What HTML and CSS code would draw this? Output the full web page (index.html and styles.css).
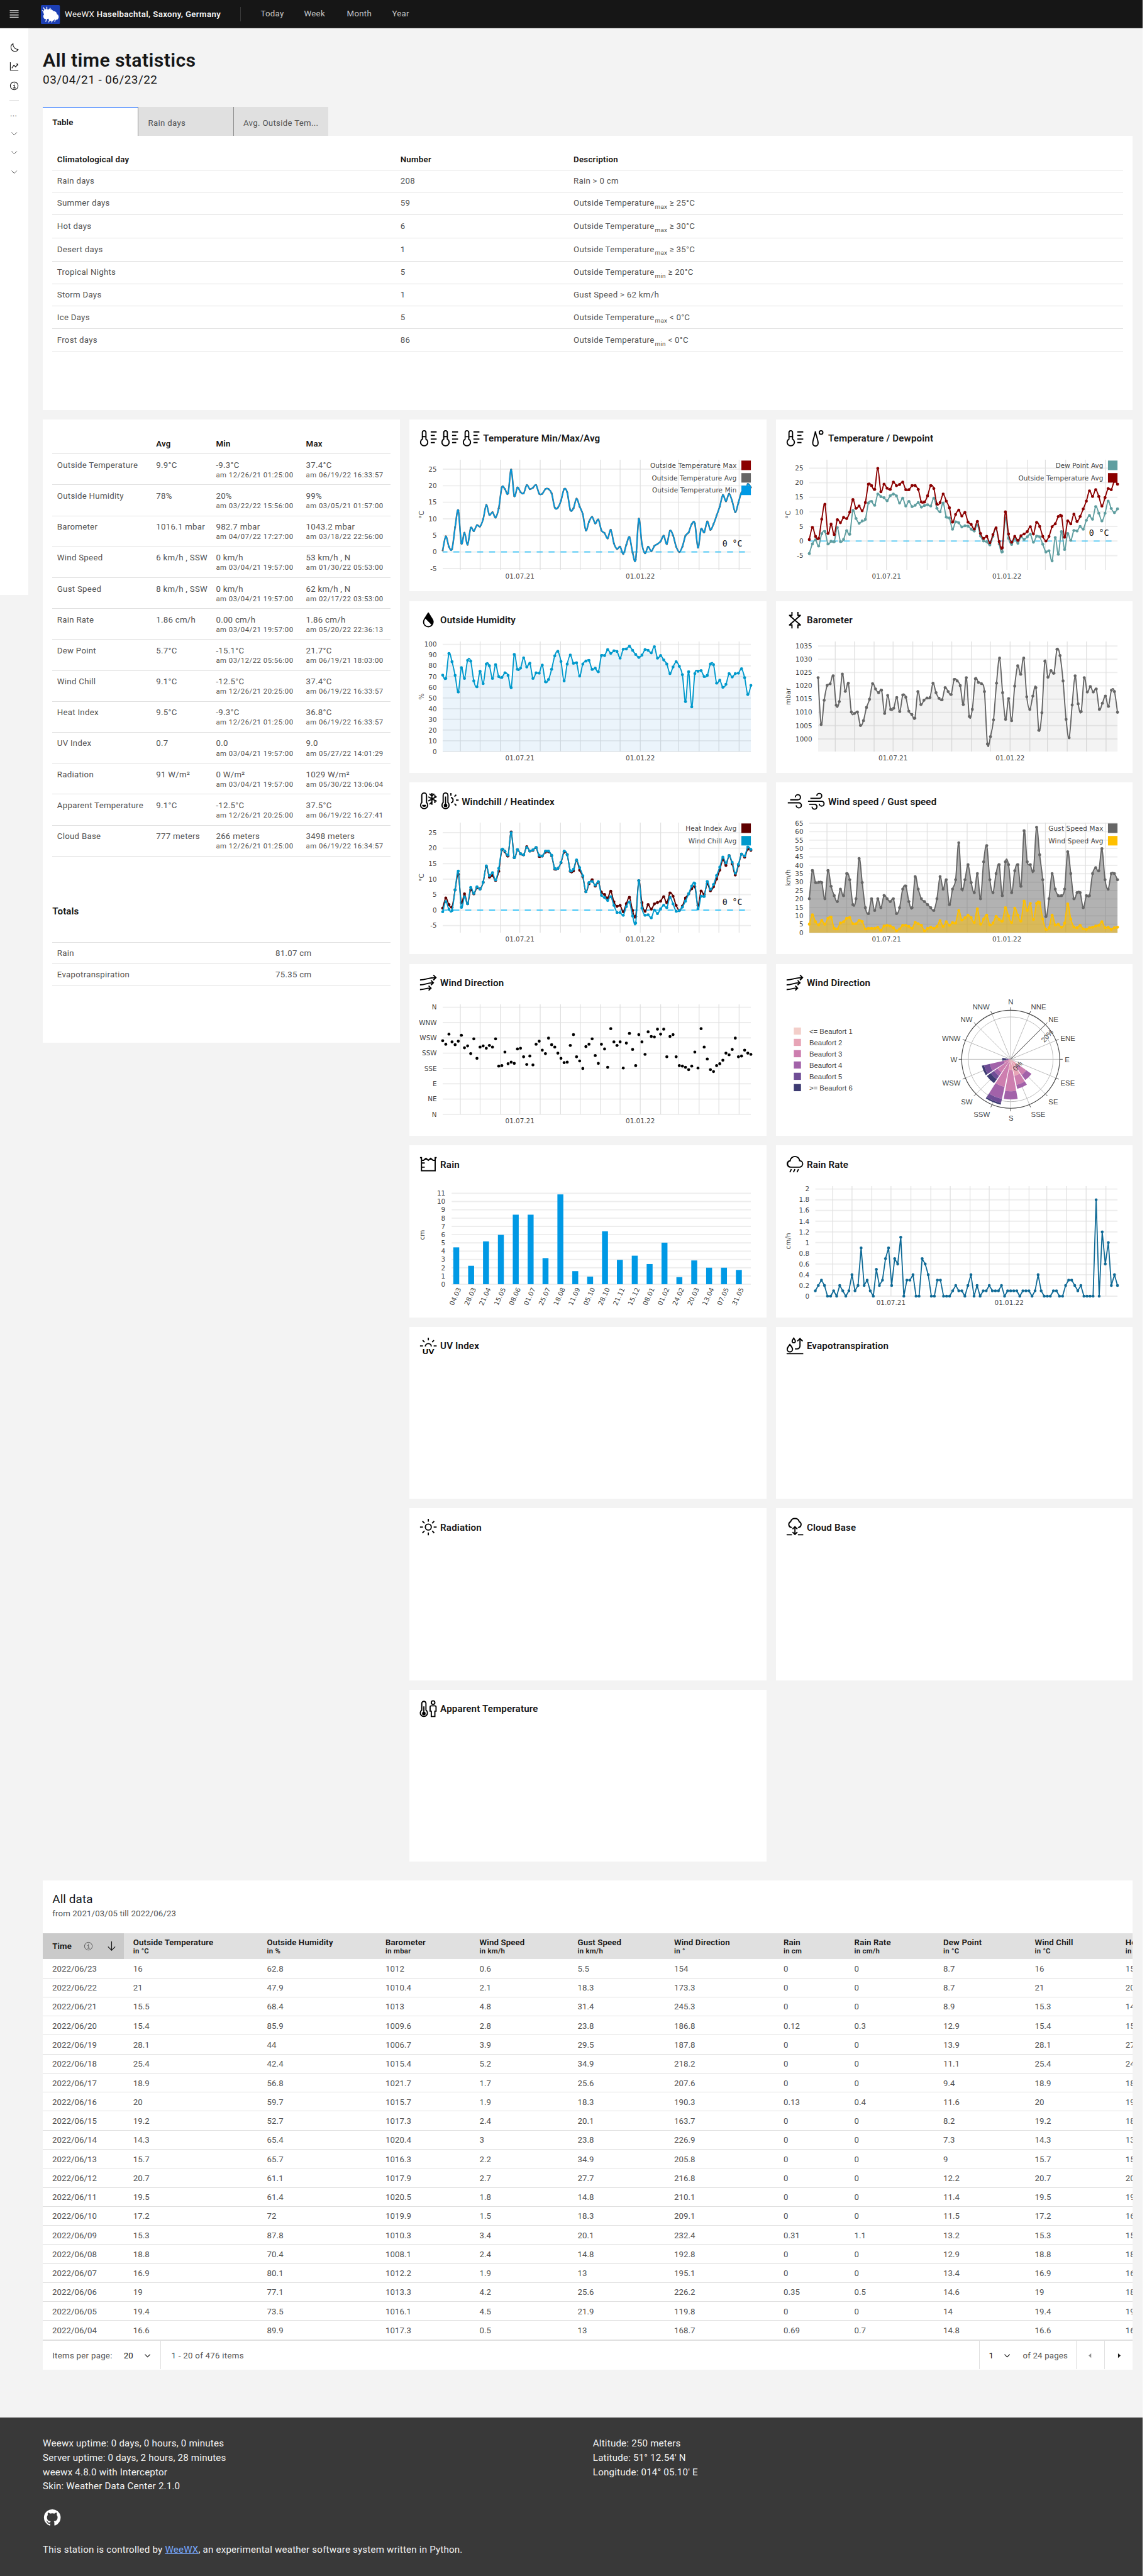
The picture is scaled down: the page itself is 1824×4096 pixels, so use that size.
FILE: index.html
```html
<!DOCTYPE html>
<html lang="en">
<head>
<meta charset="utf-8">
<title>All time statistics</title>
<link rel="stylesheet" href="styles.css">
</head>
<body>
<svg class="defs" aria-hidden="true">
  <symbol id="thermo" viewBox="0 0 32 32"><path d="M6 17V6a3 3 0 0 1 6 0v11a6.1 6.1 0 1 1-6 0zM6 13h6M20 5h10M20 11h7M20 17h10M20 23h7"/></symbol>
  <symbol id="dew" viewBox="0 0 32 32"><path d="M14.5 4C13.500 12 10 18 10 23.800a4.500 5 0 0 0 9 0C19 18 15.500 12 14.500 4z"/><circle cx="24" cy="6" r="3"/></symbol>
  <symbol id="humidity" viewBox="0 0 32 32"><path class="fill" d="M23.476 13.993 16.847 3.437a1.040 1.040 0 0 0-1.694 0L8.494 14.044A9.986 9.986 0 0 0 7 19a9 9 0 0 0 18 0 10.063 10.063 0 0 0-1.524-5.007ZM16 26a7.009 7.009 0 0 1-7-7 7.978 7.978 0 0 1 1.218-3.944l.935-1.490 10.070 10.070A6.977 6.977 0 0 1 16 26Z"/></symbol>
  <symbol id="pressure" viewBox="0 0 32 32"><path d="M11 2v6H6M21 2v6h5M11 30v-6H6M21 30v-6h5M6.700 8l18.600 16M25.300 8 6.700 24"/></symbol>
  <symbol id="chill" viewBox="0 0 32 32"><path d="M5 18V6a4 4 0 0 1 8 0v12a6 6 0 1 1-8 0zM22 2v20M18 3.500 22 7l4-3.500M18 21l4-4M16 8.500l14 7.500M16 15.500l14-7.500M27 5v4.800M27 19v-4.500"/><path class="fill" d="M5.500 22h7a3.500 3.500 0 0 1-7 0z"/></symbol>
  <symbol id="heat" viewBox="0 0 32 32"><path d="M5 18V6a4 4 0 0 1 8 0v12a6 6 0 1 1-8 0zM9 8v14M18 2v4.500M27 5l-3 3M26.500 14H31M27 23l-3-3M18 9.500a4.600 4.600 0 0 1 0 9"/><circle class="fill" cx="9" cy="23" r="3"/></symbol>
  <symbol id="wind" viewBox="0 0 32 32"><path d="M8 13.500h13a4.300 4.300 0 1 0-4.300-4.300M4 18.500h18.500a4.300 4.300 0 1 1-4.300 4.300"/></symbol>
  <symbol id="gust" viewBox="0 0 32 32"><path d="M6 11h15a4.100 4.100 0 1 0-4.100-4.100M2 16h23a4 4 0 1 1-4 4M4 21h9a4.100 4.100 0 1 1-4.100 4.100"/></symbol>
  <symbol id="direction" viewBox="0 0 32 32"><path d="M2 10.800c11 0 13-4 26-4M24.500 2.500l4.300 4.300-4.300 4.300M2 19c10 0 11-3.500 22-3.500M20.500 11.500l4 4-4 4M2 27c8 0 9-2.500 18-2.500M16.500 20.500l4 4-4 4"/></symbol>
  <symbol id="gauge" viewBox="0 0 32 32"><path d="M2 5h2.500v22h23V5H30M4.500 9.500H8L12 6l4 3.500L20 6l4 3.500h3M4.500 14H10M4.500 21H10"/></symbol>
  <symbol id="rain" viewBox="0 0 32 32"><path class="fill" d="M23.500 22H8.500A6.500 6.500 0 0 1 7.200 9.140a9 9 0 0 1 17.600 0A6.500 6.500 0 0 1 23.500 22ZM16 4a7 7 0 0 0-6.940 6.140L9 11h-.14a4.500 4.500 0 0 0 .36 9H23.500a4.500 4.500 0 0 0 .36-9H23l-.1-.82A7 7 0 0 0 16 4Z"/><path d="M10 24.500l-2.500 5M16 24.500l-2.500 5M22 24.500l-2.500 5"/></symbol>
  <symbol id="evapo" viewBox="0 0 32 32"><path d="M2 29h28M7.500 13.500C5 17 3 19 3 21.500a4.500 4.500 0 0 0 9 0C12 19 10 17 7.500 13.500zM14 3c-1.500 2.300-2.700 3.500-2.700 5a2.700 2.700 0 0 0 5.400 0C16.700 6.500 15.500 5.300 14 3zM16 21h3.500a5 5 0 0 0 5-5V3.500M20 8l4.500-4.500L29 8"/></symbol>
  <symbol id="sun" viewBox="0 0 32 32"><path d="M16 2v5M16 25v5M2 16h5M25 16h5M6.100 6.100l3.500 3.500M22.400 22.400l3.500 3.500M6.100 25.900l3.500-3.500M22.400 9.600l3.500-3.500"/><circle cx="16" cy="16" r="5"/></symbol>
  <symbol id="base" viewBox="0 0 32 32"><path d="M2 29h9M21 29h9M16 16v12M12 19.500l4-4 4 4M12 24.500l4 4 4-4M11 16.500H9.500a5 5 0 0 1-.7-9.500 7.400 7 0 0 1 14.400 0 5 5 0 0 1-.7 9.500H21"/></symbol>
  <symbol id="apparent" viewBox="0 0 32 32"><path d="M5 18V7a3.500 3.500 0 0 1 7 0v11a6 6 0 1 1-7 0zM8.500 12v12"/><circle class="fill" cx="8.500" cy="24" r="3"/><circle cx="24" cy="5.500" r="3"/><path d="M21 11h6a2 2 0 0 1 2 2v7h-2v9h-6v-9h-2v-7a2 2 0 0 1 2-2z"/></symbol>
  <symbol id="chevron" viewBox="0 0 16 16"><path d="M3 5.500l5 5 5-5"/></symbol>
  <symbol id="info" viewBox="0 0 16 16"><circle cx="8" cy="8" r="6.500"/><path d="M6.500 7H8.300v4.500M6 11.500h4.500M8 4v1.500"/></symbol>
</svg>

<header class="topbar">
  <svg class="menu" viewBox="0 0 16 14"><path d="M0 1h16M0 5h16M0 9h16M0 13h16"/></svg>
  <svg class="logo" viewBox="0 0 32 32"><rect width="32" height="32" rx="2" fill="#1c3fb4"/><g fill="#fff"><circle cx="9" cy="12" r="5"/><circle cx="9" cy="19" r="5"/><circle cx="15" cy="14" r="7"/><circle cx="21" cy="16" r="6"/><circle cx="25" cy="20" r="5"/><circle cx="18" cy="21" r="6"/></g><path stroke="#fff" stroke-width="1.500" fill="none" d="M4 4l4 6M10 3v6M16 5l-3 5M2 9l5 3M10 23l-2 5M15 24l-2 5M20 24l-2 5M25 23l-2 5"/></svg>
  <span class="brand">WeeWX <b>Haselbachtal, Saxony, Germany</b></span>
  <nav><a>Today</a><a>Week</a><a>Month</a><a>Year</a></nav>
</header>

<div class="shell">
  <aside class="rail">
    <svg viewBox="0 0 16 16"><path d="M6 1.500A7 7 0 0 0 9 14.500a6 6 0 0 0 5.500-3.200A9 9 0 0 1 6 1.500z"/></svg>
    <svg viewBox="0 0 16 16"><path d="M1.500 1v13.500H15M4 11l3.500-5 3 3L14 4M11 4h3v3"/></svg>
    <svg><use href="#info"/></svg>
    <hr>
    <span class="dots">...</span>
    <svg class="small"><use href="#chevron"/></svg>
    <svg class="small"><use href="#chevron"/></svg>
    <svg class="small"><use href="#chevron"/></svg>
  </aside>

  <main>
    <h1>All time statistics</h1>
    <p class="range">03/04/21 - 06/23/22</p>
    <div class="tabs"><span class="tab active">Table</span><span class="tab">Rain days</span><span class="tab">Avg. Outside Tem...</span></div>
    <section class="panel" id="days"></section>

    <div class="board">
      <section class="stats">
        <div id="stats"></div>
        <h3>Totals</h3>
        <div class="totals"><div><span>Rain</span><span>81.07 cm</span></div><div><span>Evapotranspiration</span><span>75.35 cm</span></div></div>
      </section>
      <div class="cards" id="cards"></div>
    </div>

    <section class="data">
      <h2>All data</h2>
      <p>from 2021/03/05 till 2022/06/23</p>
      <div class="scroller" id="data"></div>
      <footer class="pager">
        <span class="cell items">Items per page: <b>20</b><svg><use href="#chevron"/></svg></span>
        <span class="cell count">1 - 20 of 476 items</span>
        <span class="cell page"><b>1</b><svg><use href="#chevron"/></svg>of 24 pages</span>
        <span class="cell step"><svg viewBox="0 0 16 16"><path class="off" d="M10 3.500v9L5 8z"/></svg></span>
        <span class="cell step"><svg viewBox="0 0 16 16"><path class="on" d="M6 3.500v9L11 8z"/></svg></span>
      </footer>
    </section>
  </main>
</div>

<footer class="site">
  <div class="cols">
    <div>Weewx uptime: 0 days, 0 hours, 0 minutes<br>Server uptime: 0 days, 2 hours, 28 minutes<br>weewx 4.8.0 with Interceptor<br>Skin: Weather Data Center 2.1.0</div>
    <div>Altitude: 250 meters<br>Latitude: 51° 12.54' N<br>Longitude: 014° 05.10' E</div>
  </div>
  <svg class="github" viewBox="0 0 32 32"><path d="M16 2a14 14 0 0 0-4.430 27.280c.7.130 1-.3 1-.67v-2.380c-3.890.840-4.710-1.880-4.710-1.880A3.710 3.710 0 0 0 6.240 22.300c-1.270-.86.100-.85.100-.85A2.940 2.940 0 0 1 8.480 22.900a3 3 0 0 0 4.080 1.160 2.930 2.930 0 0 1 .88-1.870c-3.100-.36-6.370-1.560-6.370-6.920a5.400 5.400 0 0 1 1.440-3.760 5 5 0 0 1 .14-3.700s1.170-.38 3.850 1.430a13.300 13.300 0 0 1 7 0c2.670-1.810 3.840-1.430 3.840-1.430a5 5 0 0 1 .14 3.700 5.400 5.400 0 0 1 1.440 3.760c0 5.380-3.270 6.560-6.390 6.910a3.330 3.330 0 0 1 .95 2.590v3.840c0 .46.250.81 1 .67A14 14 0 0 0 16 2Z"/></svg>
  <p>This station is controlled by <a>WeeWX</a>, an experimental weather software system written in Python.</p>
</footer>
<script src="app.js"></script>
</body>
</html>
```
FILE: styles.css
```css
* { box-sizing: border-box; margin: 0; padding: 0; }
html { background: #fff; overflow: hidden; }
body {
  zoom: 0.94614;
  width: 1920px;
  font: 14px/18px Roboto, "Liberation Sans", sans-serif;
  letter-spacing: .3px;
  color: #161616;
  background: #f3f3f3;
}
.defs { display: block; width: 0; height: 0; position: absolute; }
svg { fill: none; stroke: currentColor; }
svg .fill { fill: currentColor; stroke: none; }
svg text { stroke: none; }

/* top bar */
.topbar { height: 48px; display: flex; align-items: center; background: #161616; border-bottom: 1px solid #393939; color: #f4f4f4; padding-left: 16px; }
.menu { width: 16px; height: 13px; stroke-width: 1.3; color: #f4f4f4; }
.logo { width: 32px; height: 32px; margin: 1px 8px 0 37px; stroke: none; }
.brand { width: 295px; letter-spacing: .3px; white-space: nowrap; }
.brand b { font-weight: 600; letter-spacing: .41px; }
nav { display: flex; gap: 36px; color: #c6c6c6; border-left: 1px solid #393939; height: 24px; line-height: 24px; padding-left: 33px; }
nav a:nth-child(1) { width: 37px; } nav a:nth-child(2) { width: 36px; } nav a:nth-child(3) { width: 40px; }

.shell { display: flex; align-items: flex-start; }
.rail { width: 48px; height: 952px; background: #fff; display: flex; flex-direction: column; align-items: center; padding-top: 24px; }
.rail svg { width: 16px; height: 16px; margin-bottom: 16px; stroke-width: 1.2; }
.rail hr { width: 16px; border: 0; border-top: 1px solid #dcdcdc; margin: 0 0 16px; }
.rail .dots { width: 14px; height: 16px; line-height: 16px; margin: -2px 0 18px 17px; color: #525252; align-self: flex-start; }
.rail .small { width: 14px; color: #525252; }

main { width: 1872px; padding: 33px 16px 0 24px; }
h1 { font-size: 32px; line-height: 40px; font-weight: 600; letter-spacing: .38px; }
.range { font-size: 20px; line-height: 28px; letter-spacing: .5px; margin-bottom: 31px; }
.tabs { display: flex; height: 48px; }
.tab { width: 160px; padding: 18px 15px 0 16px; background: #e0e0e0; color: #525252; border-left: 1px solid #8d8d8d; white-space: nowrap; letter-spacing: .33px; }
.tab.active { background: #fff; color: #161616; font-weight: 600; border-left: 0; border-top: 2px solid #0f62fe; padding-top: 16px; letter-spacing: .2px; }

/* climatological days */
.panel { background: #fff; height: 461px; padding: 22.500px 16px 0; }
.panel div { display: grid; grid-template-columns: 577px 291px 1fr; align-items: center; padding-left: 8px; border-bottom: 1px solid #e0e0e0; height: 36.600px; color: #525252; }
.panel div.head { font-weight: 600; color: #161616; height: 36px; }
.panel div.tall { height: 38.720px; padding-bottom: 1px; }
.panel sub { font-size: 10.500px; line-height: 0; vertical-align: -5px; margin-left: 1px; }

.board { display: grid; grid-template-columns: 600px 1216px; gap: 16px; margin-top: 16px; align-items: start; }
.stats { background: #fff; height: 1047px; padding: 25px 16px 0; }
.srow { display: grid; grid-template-columns: 166.400px 100.600px 151.300px 1fr; height: 52px; padding: 9px 0 0 8px; border-bottom: 1px solid #e0e0e0; color: #525252; white-space: nowrap; }
.srow.head { font-weight: 600; color: #161616; height: 33.500px; padding-top: 7px; }
.srow small { display: block; font-size: 12px; line-height: 16px; letter-spacing: .53px; }
h3 { font-size: 16px; line-height: 24px; font-weight: 600; margin: 81px 0 39px; letter-spacing: .1px; }
.totals { border-top: 1px solid #e0e0e0; color: #525252; }
.totals div { display: grid; grid-template-columns: 367px 1fr; align-items: center; height: 36px; padding-left: 8px; border-bottom: 1px solid #e0e0e0; }

.cards { display: grid; grid-template-columns: 600px 600px; gap: 16px; }
.card { background: #fff; height: 289px; }
.card h4 { display: flex; align-items: center; gap: 4px; height: 48px; padding: 16px 0 0 16px; font-size: 16px; font-weight: 600; letter-spacing: .17px; }
.card h4 span { padding-top: 1.500px; }
.card h4 svg { width: 32px; height: 32px; stroke-width: 2; color: #000; }
.uvtext { font: 600 12px Roboto, sans-serif; fill: #000; letter-spacing: 0; }
.chart { display: block; width: 600px; height: 241px; font: 11px "DejaVu Sans", sans-serif; letter-spacing: 0; }
.chart text { fill: #444; }
.chart .zero { font: 14px "DejaVu Sans Mono", monospace; fill: #161616; }
.chart.rose { font: 12px "Liberation Sans", sans-serif; }

/* data table */
.data { background: #fff; height: 822px; margin-top: 32px; }
.data h2 { font-size: 20px; line-height: 26px; font-weight: 400; padding: 18.500px 0 0 16px; letter-spacing: .1px; }
.data > p { padding-left: 16px; height: 43.500px; color: #525252; letter-spacing: .14px; line-height: 22px; }
.scroller { overflow: hidden; }
.drow { display: grid; grid-template-columns: 136px 225px 199.200px 158px 164.800px 162.200px 183.900px 119.100px 149.500px 153.700px 152.500px 28.100px; height: 32px; align-items: center; border-bottom: 1px solid #e0e0e0; color: #525252; letter-spacing: .06px; }
.drow > span { padding-left: 15.800px; padding-top: 1px; white-space: nowrap; overflow: hidden; }
.drow.head { height: 44px; background: #e0e0e0; color: #161616; font-weight: 600; line-height: 16px; letter-spacing: .16px; }
.drow.head small { display: block; font-size: 12px; line-height: 13px; letter-spacing: .3px; }
.drow.head .sorted { background: #cacaca; height: 44px; padding: 0 10px 0 16px; display: flex; align-items: center; }
.sorted svg { width: 16px; height: 16px; stroke-width: 1; color: #525252; margin-left: 20px; }
.sorted svg + svg { width: 20px; height: 20px; margin-left: auto; color: #161616; stroke-width: 1.300; }
.pager { display: flex; height: 49px; color: #525252; border-top: 1px solid #e0e0e0; letter-spacing: .3px; }
.pager .cell { display: flex; align-items: center; border-left: 1px solid #e0e0e0; padding-top: 2px; }
.pager .items { width: 198px; padding-left: 16px; border-left: 0; }
.pager b { font-weight: 400; color: #161616; }
.pager .items b { margin-left: 19px; width: 33px; }
.pager svg { width: 14px; height: 14px; stroke-width: 1.300; color: #161616; }
.pager .count { flex: 1; padding-left: 17px; }
.pager .page { width: 162px; padding-left: 15px; letter-spacing: .2px; }
.pager .page b { width: 24px; }
.pager .page svg { margin-right: 19px; }
.pager .step { width: 48px; justify-content: center; }
.on { fill: #161616; stroke: none; } .off { fill: #8d8d8d; stroke: none; }

.site { margin-top: 80px; height: 266px; background: #393939; color: #f4f4f4; font-size: 16px; line-height: 24px; letter-spacing: .2px; padding: 32px 0 0 72px; width: 1920px; }
.cols { display: grid; grid-template-columns: 924.500px 1fr; height: 120px; }
.github { display: block; width: 32px; height: 32px; fill: #fff; stroke: none; margin-bottom: 26.500px; }
.site a { color: #78a9ff; text-decoration: underline; }
```
FILE: app.js
```js
const $ = id => document.getElementById(id);

/* ---------- tables ---------- */
const T = 'Outside Temperature';
const days = [['Rain days', 208, 'Rain &gt; 0 cm'], ['Summer days', 59, T + '<sub>max</sub> ≥ 25°C'], ['Hot days', 6, T + '<sub>max</sub> ≥ 30°C'], ['Desert days', 1, T + '<sub>max</sub> ≥ 35°C'], ['Tropical Nights', 5, T + '<sub>min</sub> ≥ 20°C'], ['Storm Days', 1, 'Gust Speed &gt; 62 km/h'], ['Ice Days', 5, T + '<sub>max</sub> &lt; 0°C'], ['Frost days', 86, T + '<sub>min</sub> &lt; 0°C']];
$('days').innerHTML = '<div class="head"><span>Climatological day</span><span>Number</span><span>Description</span></div>' +
  days.map(d => `<div class="${d[2].includes('sub') ? 'tall' : ''}">${d.map(c => `<span>${c}</span>`).join('')}</div>`).join('');

const stats = `Outside Temperature|9.9°C|-9.3°C|12/26/21 01:25:00|37.4°C|06/19/22 16:33:57
Outside Humidity|78%|20%|03/22/22 15:56:00|99%|03/05/21 01:57:00
Barometer|1016.1 mbar|982.7 mbar|04/07/22 17:27:00|1043.2 mbar|03/18/22 22:56:00
Wind Speed|6 km/h , SSW|0 km/h|03/04/21 19:57:00|53 km/h , N|01/30/22 05:53:00
Gust Speed|8 km/h , SSW|0 km/h|03/04/21 19:57:00|62 km/h , N|02/17/22 03:53:00
Rain Rate|1.86 cm/h|0.00 cm/h|03/04/21 19:57:00|1.86 cm/h|05/20/22 22:36:13
Dew Point|5.7°C|-15.1°C|03/12/22 05:56:00|21.7°C|06/19/21 18:03:00
Wind Chill|9.1°C|-12.5°C|12/26/21 20:25:00|37.4°C|06/19/22 16:33:57
Heat Index|9.5°C|-9.3°C|12/26/21 01:25:00|36.8°C|06/19/22 16:33:57
UV Index|0.7|0.0|03/04/21 19:57:00|9.0|05/27/22 14:01:29
Radiation|91 W/m²|0 W/m²|03/04/21 19:57:00|1029 W/m²|05/30/22 13:06:04
Apparent Temperature|9.1°C|-12.5°C|12/26/21 20:25:00|37.5°C|06/19/22 16:27:41
Cloud Base|777 meters|266 meters|12/26/21 01:25:00|3498 meters|06/19/22 16:34:57`.split('\n').map(r => r.split('|'));
$('stats').innerHTML = '<div class="srow head"><span></span><span>Avg</span><span>Min</span><span>Max</span></div>' +
  stats.map(r => `<div class="srow"><span>${r[0]}</span><span>${r[1]}</span><span>${r[2]}<small>am ${r[3]}</small></span><span>${r[4]}<small>am ${r[5]}</small></span></div>`).join('');

const heads = [['Outside Temperature', 'in °C'], ['Outside Humidity', 'in %'], ['Barometer', 'in mbar'], ['Wind Speed', 'in km/h'], ['Gust Speed', 'in km/h'], ['Wind Direction', 'in °'], ['Rain', 'in cm'], ['Rain Rate', 'in cm/h'], ['Dew Point', 'in °C'], ['Wind Chill', 'in °C'], ['Heat Index', 'in °C']];
const rows = `23 16 62.8 1012 0.6 5.5 154 0 0 8.7 16 15.4
22 21 47.9 1010.4 2.1 18.3 173.3 0 0 8.7 21 20.1
21 15.5 68.4 1013 4.8 31.4 245.3 0 0 8.9 15.3 14.9
20 15.4 85.9 1009.6 2.8 23.8 186.8 0.12 0.3 12.9 15.4 15.3
19 28.1 44 1006.7 3.9 29.5 187.8 0 0 13.9 28.1 27.6
18 25.4 42.4 1015.4 5.2 34.9 218.2 0 0 11.1 25.4 24.6
17 18.9 56.8 1021.7 1.7 25.6 207.6 0 0 9.4 18.9 18.1
16 20 59.7 1015.7 1.9 18.3 190.3 0.13 0.4 11.6 20 19.4
15 19.2 52.7 1017.3 2.4 20.1 163.7 0 0 8.2 19.2 18.3
14 14.3 65.4 1020.4 3 23.8 226.9 0 0 7.3 14.3 13.5
13 15.7 65.7 1016.3 2.2 34.9 205.8 0 0 9 15.7 15.1
12 20.7 61.1 1017.9 2.7 27.7 216.8 0 0 12.2 20.7 20.2
11 19.5 61.4 1020.5 1.8 14.8 210.1 0 0 11.4 19.5 19.1
10 17.2 72 1019.9 1.5 18.3 209.1 0 0 11.5 17.2 16.8
09 15.3 87.8 1010.3 3.4 20.1 232.4 0.31 1.1 13.2 15.3 15.3
08 18.8 70.4 1008.1 2.4 14.8 192.8 0 0 12.9 18.8 18.5
07 16.9 80.1 1012.2 1.9 13 195.1 0 0 13.4 16.9 16.8
06 19 77.1 1013.3 4.2 25.6 226.2 0.35 0.5 14.6 19 18.9
05 19.4 73.5 1016.1 4.5 21.9 119.8 0 0 14 19.4 19.2
04 16.6 89.9 1017.3 0.5 13 168.7 0.69 0.7 14.8 16.6 16.7`.split('\n').map(r => r.split(' '));
$('data').innerHTML = '<div class="drow head"><span class="sorted">Time<svg><use href="#info"/></svg><svg viewBox="0 0 20 20"><path d="M10 2v15M4 11l6 6 6-6"/></svg></span>' +
  heads.map(h => `<span>${h[0]}<small>${h[1]}</small></span>`).join('') + '</div>' +
  rows.map(r => `<div class="drow"><span>2022/06/${r[0]}</span>${r.slice(1).map(c => `<span>${c}</span>`).join('')}</div>`).join('');

/* ---------- series ---------- */
const n = s => s.trim().split(/\s+/).map(Number);
const temp = n('.5 4.7 1.6 .9 7.5 12.6 2.6 5.8 2.2 7.3 6.3 8.1 7.7 9.9 14.2 11.2 12 10.4 13.2 19.5 19 17.7 24.9 16.9 19.5 18.1 17.7 20.2 19 19.4 20.2 17.6 17.6 19 19 17.7 13.4 13.4 15.5 19 18 12.7 13.2 16.1 13.7 11.4 6.5 9.1 10.6 8.6 9.8 6.5 5.7 4.1 6.7 2.6 .9 1.6 -.6 2.2 4.5 -.2 -2.3 10 2.4 -.4 1.6 .2 1.8 2.4 3.2 4.9 2.4 6.4 5 1.6 0 1.6 4.9 5.9 8.4 8.6 1.3 6.9 5.9 9.2 6.7 8.4 11 13.7 17.2 15.3 17.6 15.3 12 14.9 18 17.6 20.5 19.5');
const dew = n('603 561 543 570 516 506 561 549 551 489 550 541 503 518 414 449 470 460 453 381 374 391 342 353 358 371 349 342 350 381 360 394 374 397 391 379 399 392 389 394 360 404 420 381 443 447 496 464 468 486 481 483 496 504 478 526 548 551 565 527 492 561 595 447 536 563 537 558 530 541 530 518 553 527 530 562 596 591 635 533 606 507 585 515 545 502 504 484 496 457 436 452 397 426 460 426 373 405 423 407').map(v => (548 - v) / 12.8);
const hum = n('1136 1150 1041 1077 1137 1210 1103 1150 1071 1074 1161 1187 1119 1173 1087 1095 1150 1090 1142 1146 1126 1137 1191 1045 1110 1105 1060 1100 1084 1150 1126 1127 1092 1165 1155 1110 1051 1031 1076 1161 1087 1048 1084 1082 1140 1087 1074 1071 1111 1105 1121 1050 1050 1024 1040 1029 1032 1061 1022 1021 1009 1027 1045 1058 1048 1024 1027 1038 1011 1061 1050 1069 1087 1129 1100 1077 1097 1134 1252 1121 1275 1129 1119 1116 1142 1137 1087 1090 1171 1158 1189 1176 1129 1144 1129 1127 1108 1147 1221 1181').map(v => (1471 - v) / 4.7);
const baro = n('1147 1353 1246 1181 1174 1139 1268 1252 1131 1207 1171 1298 1304 1298 1357 1336 1278 1242 1173 1197 1213 1202 1304 1225 1286 1281 1234 1296 1223 1233 1294 1309 1325 1208 1265 1246 1236 1234 1171 1213 1238 1244 1191 1208 1221 1155 1161 1182 1265 1147 1317 1286 1152 1168 1173 1208 1438 1406 1332 1171 1061 1213 1330 1239 1336 1184 1095 1132 1061 1231 1286 1228 1191 1378 1301 1074 1145 1116 1127 1022 1050 1161 1330 1411 1267 1139 1262 1296 1147 1210 1186 1210 1197 1286 1259 1228 1273 1202 1208 1299').map(v => 1000 + (1416 - v) / 11.657);
const heat = n('574 531 559 569 496 430 551 513 555 496 513 487 492 464 397 442 435 456 417 326 334 352 250 359 326 343 347 313 331 328 317 354 352 336 334 351 408 405 381 336 346 417 415 371 412 440 504 470 453 480 464 506 516 531 502 547 566 562 589 555 528 584 609 457 551 587 559 578 556 550 544 525 551 509 523 562 584 565 531 513 491 483 562 501 516 470 500 483 450 412 367 392 351 386 433 392 344 357 323 328').map(v => (582 - v) / 13.16);
const chill = n('589 546 579 584 496 416 570 526 555 486 511 483 493 464 394 435 423 454 405 324 331 348 253 359 325 342 347 316 331 326 316 349 352 331 331 349 405 405 379 331 347 415 408 369 402 436 504 465 460 476 461 519 529 541 525 562 592 592 604 567 548 607 637 457 574 604 602 615 582 597 577 561 572 528 556 587 584 569 544 513 480 469 577 523 524 460 494 473 435 400 357 382 351 379 425 387 344 352 314 324').map(v => (582 - v) / 13.16);
const gust = n('534 414 465 464 465 534 414 481 521 546 493 521 427 453 559 534 363 465 572 597 534 584 534 572 520 534 546 534 597 572 493 480 546 572 440 493 534 546 559 572 584 534 440 493 453 559 493 453 296 493 453 389 465 508 427 534 377 308 453 508 427 389 521 377 389 508 415 389 481 245 377 389 415 230 347 453 610 534 427 493 521 521 493 334 427 534 508 508 572 521 521 427 402 415 321 453 493 427 427 453').map(v => (678 - v) / 7.154);
const wind = n('642 602 632 645 626 642 617 612 660 662 637 632 617 614 640 640 626 631 662 660 660 660 655 668 650 647 650 657 670 662 647 647 652 660 634 640 647 670 660 655 660 652 627 652 632 647 635 637 584 624 615 604 614 635 577 642 620 604 645 637 609 622 629 572 607 635 574 604 629 544 584 554 622 554 551 620 664 657 604 645 642 655 637 556 620 654 657 647 662 664 657 655 650 647 632 657 655 664 657 655').map(v => (678 - v) / 7.154);
const dirs = n('1136 1151 1108 1141 1153 1138 1113 1166 1158 1191 1128 1211 1163 1158 1168 1156 1163 1128 1244 1242 1184 1234 1227 1232 1171 1168 1204 1237 1201 1239 1151 1138 1176 1191 1125 1153 1163 1189 1211 1229 1227 1156 1110 1204 1222 1254 1161 1151 1128 1199 1232 1151 1171 1249 1085 1141 1156 1141 1252 1146 1105 1173 1242 1110 1141 1194 1098 1118 1120 1087 1108 1087 1204 1118 1110 1204 1242 1244 1249 1259 1244 1184 1252 1085 1163 1214 1259 1267 1242 1234 1219 1189 1196 1173 1125 1204 1201 1176 1189 1194').map(v => (1449 - v) / 65);
const rate = n('.1 .2 .3 .2 0 0 .1 0 .2 .1 0 .1 .4 .1 .2 .9 .2 .3 .1 0 .5 .2 .3 .7 .9 .2 .7 .6 1.1 0 .3 .3 .4 0 0 .7 .6 .4 0 0 .3 .3 0 0 0 .1 .2 .1 .1 0 .2 .4 0 .2 0 .1 .1 .2 .1 .1 .1 .2 0 .1 .1 .1 .1 0 .1 .1 .1 0 .1 .4 .1 0 0 0 .1 .1 0 0 .2 .3 .3 .2 .1 .2 0 0 0 0 1.8 0 1.2 .6 1 .2 .4 .2');

/* ---------- time charts ---------- */
const months = [.0573, .1214, .187, .2504, .3164, .3824, .4466, .5122, .5756, .6412, .7073, .766, .8321, .8962, .9618];
const f = v => v.toFixed(1);

function curve(p, smooth) {
  let d = `M${f(p[0][0])} ${f(p[0][1])}`;
  for (let i = 0; i < p.length - 1; i++) {
    const a = p[i - 1] || p[i], b = p[i], c = p[i + 1], e = p[i + 2] || c;
    d += smooth
      ? `C${f(b[0] + (c[0] - a[0]) / 6)} ${f(b[1] + (c[1] - a[1]) / 6)} ${f(c[0] - (e[0] - b[0]) / 6)} ${f(c[1] - (e[1] - b[1]) / 6)} ${f(c[0])} ${f(c[1])}`
      : `L${f(c[0])} ${f(c[1])}`;
  }
  return d;
}

/* y0: position of value zero, u: pixels per unit */
function chart(o) {
  const left = o.left || 56, right = 574, Y = v => o.y0 - v * o.u;
  let s = '';
  for (const [v, label] of o.ticks)
    s += `<path d="M${left} ${f(Y(v))}H${right}" stroke="#ededed" stroke-width="2"/><text x="${left - 10}" y="${f(Y(v) + 4)}" text-anchor="end">${label}</text>`;
  for (const m of months) s += `<path d="M${f(left + m * (right - left))} 68V253" stroke="#e0e0e0" stroke-width="1.300"/>`;
  for (const [m, t] of [[.2504, '01.07.21'], [.6412, '01.01.22']])
    s += `<text x="${f(left + m * (right - left))}" y="268" text-anchor="middle">${t}</text>`;
  if (o.zero) s += `<path d="M${left} ${f(Y(0))}H${right}" stroke="#35c3f7" stroke-width="1.800" stroke-dasharray="10 10" stroke-dashoffset="2"/>`;
  for (const r of o.series) {
    const p = r.data.map((v, i) => [left + i * (right - left) / (r.data.length - 1), Y(v)]);
    const d = curve(p, !o.straight);
    if (r.area) s += `<path d="${d}V253H${left}Z" fill="${r.area}" stroke="none"/>`;
    if (!r.dotsOnly) s += `<path d="${d}" stroke="${r.color}" stroke-width="${r.w || 2}" stroke-linejoin="round"/>`;
    if (r.r) s += `<g fill="${r.color}" stroke="none">${p.map(q => `<circle cx="${f(q[0])}" cy="${f(q[1])}" r="${r.r}"/>`).join('')}</g>`;
  }
  (o.legend || []).forEach(([t, c, w], i) => {
    s += `<rect x="558" y="${69.500 + 21 * i}" width="16" height="16" fill="${c}" stroke="none"/><text x="${550 - w}" y="${81.500 + 21 * i}" textLength="${w}">${t}</text>`;
  });
  if (o.zero) s += `<text class="zero" x="526" y="${f(Y(0) - 9)}">0 °C</text>`;
  if (o.unit) s += `<text transform="translate(24.500 160.500) rotate(-90)" text-anchor="middle">${o.unit}</text>`;
  return `<svg class="chart" viewBox="0 48 600 241">${s}</svg>`;
}
const range = (a, b, st) => { const r = []; for (let v = a; v <= b + 1e-9; v += st) r.push([v, +v.toFixed(1)]); return r; };

function rainBars() {
  const v = [4.46, 2.23, 5.18, 5.97, 8.41, 8.41, 3.16, 10.86, 1.58, .93, 6.4, 2.95, 3.45, 2.44, 5.03, .86, 2.88, 2, 2, 1.73];
  const l = '04.03 28.03 21.04 15.05 08.06 01.07 25.07 18.08 11.09 05.10 28.10 21.11 15.12 08.01 01.02 24.02 20.03 13.04 07.05 31.05'.split(' ');
  let s = '';
  for (let i = 0; i < 12; i++) s += `<path d="M71 ${f(233 - i * 13.9)}H574" stroke="#ededed" stroke-width="2"/><text x="60.500" y="${f(237 - i * 13.9)}" text-anchor="end">${i}</text>`;
  v.forEach((h, i) => {
    const x = 78.8 + 25 * i;
    s += `<rect x="${f(x - 5)}" y="${f(233 - h * 13.9)}" width="10" height="${f(h * 13.9)}" fill="#0099e5" stroke="none"/><text transform="translate(${f(x + 8.500)} 241) rotate(-65)" text-anchor="end">${l[i]}</text>`;
  });
  return `<svg class="chart" viewBox="0 48 600 241">${s}<text transform="translate(25.500 150) rotate(-90)" text-anchor="middle">cm</text></svg>`;
}

function rose() {
  const cx = 394.5, cy = 160.4, R = 82.4;
  const col = ['#f3cec9', '#e7a4b6', '#cd7eaf', '#a262a9', '#6f4d96', '#3d3b72'];
  const pt = (r, a) => `${f(cx + r * Math.sin(a * Math.PI / 180))} ${f(cy - r * Math.cos(a * Math.PI / 180))}`;
  let s = '';
  for (let i = 0; i < 16; i++) s += `<path d="M${cx} ${cy}L${pt(R, i * 22.5)}" stroke="#b8b8b8"/><path d="M${pt(R, i * 22.5)}L${pt(R + 5, i * 22.5)}" stroke="#444"/>`;
  s += `<circle cx="${cx}" cy="${cy}" r="71.200" stroke="#b8b8b8"/>`;
  /* [bearing, [Beaufort class, outer radius]...] */
  const petals = [[270, [2, 4], [4, 7], [5, 14.2]], [247.5, [2, 12], [3, 36], [4, 46], [5, 49.7]], [225, [1, 5], [2, 27], [3, 34], [4, 41], [5, 49]], [202.5, [1, 6], [2, 47.4], [3, 68], [4, 75.5], [5, 78]], [180, [0, 3], [1, 17.8], [2, 53.8], [3, 67.6]], [157.5, [0, 4], [1, 28.5], [2, 44], [3, 50.7]], [135, [1, 15], [2, 32], [3, 42.6]]];
  for (const [a, ...seg] of petals) {
    let r0 = 0;
    for (const [c, r] of seg) {
      s += `<path d="M${pt(r0, a - 10)}L${pt(r, a - 10)}A${r} ${r} 0 0 1 ${pt(r, a + 10)}L${pt(r0, a + 10)}A${r0} ${r0} 0 0 0 ${pt(r0, a - 10)}Z" fill="${col[c]}" stroke="none"/>`;
      r0 = r;
    }
  }
  s += `<circle cx="${cx}" cy="${cy}" r="${R}" stroke="#444" stroke-width="1.200"/><path d="M${cx} ${cy}L${pt(R, 45)}" stroke="#444"/>`;
  const names = [['N', 394.5, 64, 'middle'], ['NNE', 428.7, 71.8, 'start'], ['NE', 458, 93.6, 'start'], ['ENE', 478.3, 125.2, 'start'], ['E', 485.5, 160.8, 'start'], ['ESE', 478.3, 200, 'start'], ['SE', 458, 232, 'start'], ['SSE', 428.7, 253, 'start'], ['S', 395, 259, 'middle'], ['SSW', 359.5, 253, 'end'], ['SW', 330.2, 232, 'end'], ['WSW', 310.3, 200, 'end'], ['W', 304.6, 160.8, 'end'], ['WNW', 310.3, 125.2, 'end'], ['NW', 330.2, 93.6, 'end'], ['NNW', 359.1, 71.8, 'end']];
  for (const [t, x, y, a] of names) s += `<text x="${x}" y="${y + 4.3}" text-anchor="${a}">${t}</text>`;
  s += `<text transform="translate(459 124) rotate(-48)" text-anchor="middle">20%</text><text transform="translate(409 174.500) rotate(-48)" text-anchor="middle">0%</text>`;
  ['&lt;= Beaufort 1', 'Beaufort 2', 'Beaufort 3', 'Beaufort 4', 'Beaufort 5', '&gt;= Beaufort 6'].forEach((t, i) => {
    s += `<rect x="30" y="${107 + 19 * i}" width="12" height="12" fill="${col[i]}" stroke="none"/><text x="56" y="${118 + 19 * i}">${t}</text>`;
  });
  return `<svg class="chart rose" viewBox="0 48 600 241">${s}</svg>`;
}

/* ---------- cards ---------- */
const uvIcon = '<svg viewBox="0 0 32 32"><path d="M16 2v4.500M6.500 6.500 9.500 9.500M25.500 6.500l-3 3M2 16h5M25 16h5M11 17a5 5 0 0 1 10 0"/><text class="uvtext" x="6" y="30" textLength="20" lengthAdjust="spacingAndGlyphs">UV</text></svg>';
const icon = i => i === 'uv' ? uvIcon : `<svg><use href="#${i}"/></svg>`;
const cards = [
  ['thermo thermo thermo', 'Temperature Min/Max/Avg', chart({ y0: 223.06, u: 5.563, ticks: range(-5, 25, 5), zero: 1, unit: '°C', series: [{ data: temp, color: '#666', w: 2.6, r: 1.7 }, { data: temp, color: '#0099e0', w: 1.9 }], legend: [['Outside Temperature Max', '#8b0000', 145.3], ['Outside Temperature Avg', '#666', 142.5], ['Outside Temperature Min', '#0099e5', 142]] })],
  ['thermo dew', 'Temperature / Dewpoint', chart({ y0: 204.7, u: 4.898, ticks: range(-5, 25, 5), zero: 1, unit: '°C', series: [{ data: dew, color: '#5f9ea0', r: 2.5 }, { data: temp, color: '#8b0000', r: 2.5 }], legend: [['Dew Point Avg', '#5f9ea0', 80], ['Outside Temperature Avg', '#8b0000', 142.5]] })],
  ['humidity', 'Outside Humidity', chart({ y0: 252.9, u: 1.7986, ticks: range(0, 100, 10), unit: '%', series: [{ data: hum, color: '#0099cc', r: 2.5, area: 'rgba(0,120,200,.08)' }] })],
  ['pressure', 'Barometer', chart({ left: 70.8, y0: 231.85 + 4461, u: 4.461, ticks: range(1000, 1035, 5), unit: 'mbar', series: [{ data: baro, color: '#666', r: 2.5, area: 'rgba(100,100,100,.08)' }] })],
  ['chill heat', 'Windchill / Heatindex', chart({ y0: 215.1, u: 5.203, ticks: range(-5, 25, 5), zero: 1, unit: '°C', series: [{ data: heat, color: '#5f0000', r: 2.5 }, { data: chill, color: '#0099cc', r: 2.5 }], legend: [['Heat Index Avg', '#5f0000', 85.8], ['Wind Chill Avg', '#0099cc', 81]] })],
  ['wind gust', 'Wind speed / Gust speed', chart({ y0: 253, u: 2.828, ticks: range(0, 65, 5), unit: 'km/h', series: [{ data: gust, color: '#666', r: 2.5, area: 'rgba(102,102,102,.5)' }, { data: wind, color: '#ffc000', r: 2.5, area: 'rgba(255,192,0,.5)' }], legend: [['Gust Speed Max', '#666', 92], ['Wind Speed Avg', '#ffc000', 92]] })],
  ['direction', 'Wind Direction', chart({ y0: 252.95, u: 25.7, ticks: ['N', 'NE', 'E', 'SSE', 'SSW', 'WSW', 'WNW', 'N'].map((t, i) => [i, t]), series: [{ data: dirs, color: '#000', r: 2.5, dotsOnly: 1 }] })],
  ['direction', 'Wind Direction', rose()],
  ['gauge', 'Rain', rainBars()],
  ['rain', 'Rain Rate', chart({ left: 66.1, y0: 253, u: 90, ticks: range(0, 2, .2), straight: 1, unit: 'cm/h', series: [{ data: rate, color: '#0f6a96', r: 2.4, w: 1.9 }] })],
  ['uv', 'UV Index'], ['evapo', 'Evapotranspiration'], ['sun', 'Radiation'], ['base', 'Cloud Base'], ['apparent', 'Apparent Temperature']
];
$('cards').innerHTML = cards.map(([icons, title, body]) =>
  `<section class="card"><h4>${icons.split(' ').map(icon).join('')}<span>${title}</span></h4>${body || ''}</section>`).join('');
```
